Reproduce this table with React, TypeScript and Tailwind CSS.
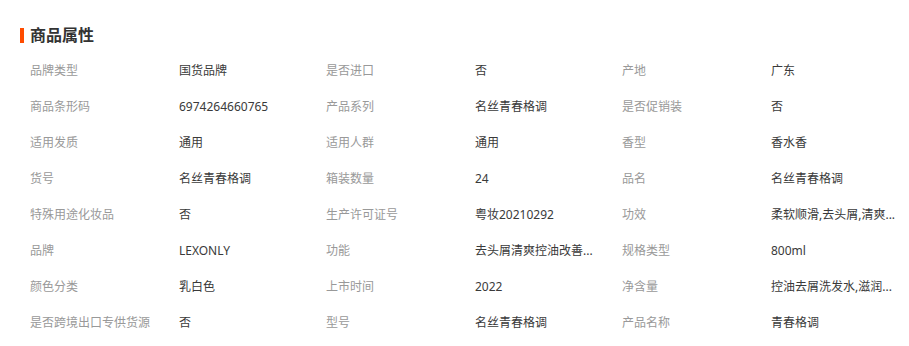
import React from "react";

const rows: [string, string][][] = [
  [["品牌类型", "国货品牌"], ["是否进口", "否"], ["产地", "广东"]],
  [["商品条形码", "6974264660765"], ["产品系列", "名丝青春格调"], ["是否促销装", "否"]],
  [["适用发质", "通用"], ["适用人群", "通用"], ["香型", "香水香"]],
  [["货号", "名丝青春格调"], ["箱装数量", "24"], ["品名", "名丝青春格调"]],
  [["特殊用途化妆品", "否"], ["生产许可证号", "粤妆20210292"], ["功效", "柔软顺滑,去头屑,清爽..."]],
  [["品牌", "LEXONLY"], ["功能", "去头屑清爽控油改善..."], ["规格类型", "800ml"]],
  [["颜色分类", "乳白色"], ["上市时间", "2022"], ["净含量", "控油去屑洗发水,滋润..."]],
  [["是否跨境出口专供货源", "否"], ["型号", "名丝青春格调"], ["产品名称", "青春格调"]],
];

export default function App() {
  return (
    <div
      className="w-[909px] h-[346px] bg-white overflow-hidden pt-[24px]"
      style={{ fontFamily: '"Noto Sans", "Noto Sans CJK SC", sans-serif' }}
    >
      <div className="flex items-center h-[22px] pl-[20px]">
        <span className="w-[4px] h-[15px] bg-[#ff4c00] mr-[6px]" />
        <span className="text-[16px] font-bold text-[#333] leading-[22px]">商品属性</span>
      </div>
      <div className="mt-[7px] pl-[30px]">
        {rows.map((row, i) => (
          <div key={i} className="flex h-[36px] items-center text-[12px] leading-[36px]">
            {row.map(([k, v], j) => (
              <div key={j} className="flex w-[296px] shrink-0">
                <div className="w-[149px] shrink-0 text-[#999] whitespace-nowrap">{k}</div>
                <div className="w-[147px] shrink-0 text-[#3a3a3a] whitespace-nowrap">{v}</div>
              </div>
            ))}
          </div>
        ))}
      </div>
    </div>
  );
}
